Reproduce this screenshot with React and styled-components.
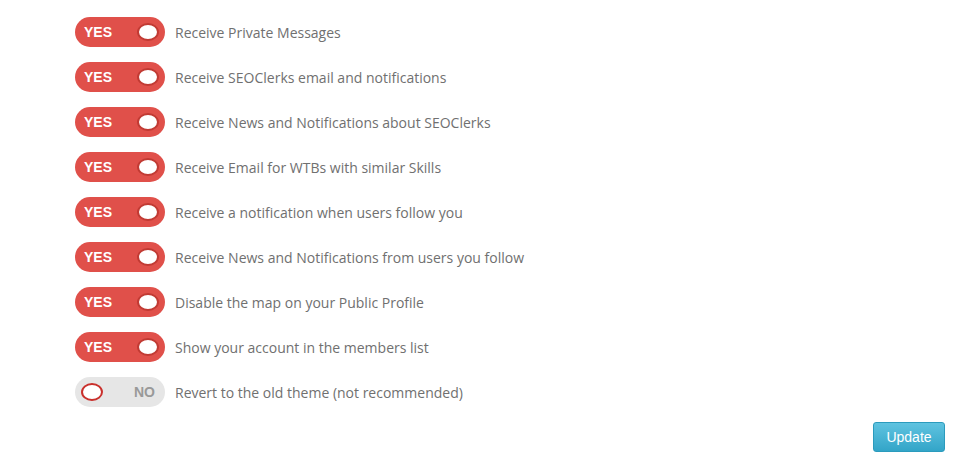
import React, { useState } from "react";
import styled, { createGlobalStyle } from "styled-components";

const GlobalStyle = createGlobalStyle`
  body {
    margin: 0;
    background: #fff;
    font-family: "Open Sans", "Liberation Sans", sans-serif;
  }
`;

const Wrapper = styled.div`
  width: 957px;
  height: 460px;
  box-sizing: border-box;
  padding: 17px 12px 0 75px;
  display: flex;
  flex-direction: column;
`;

const List = styled.ul`
  list-style: none;
  margin: 0;
  padding: 0;
  display: flex;
  flex-direction: column;
  gap: 15px;
`;

const Row = styled.li`
  display: flex;
  flex-direction: row;
  align-items: center;
  height: 30px;
`;

const Switch = styled.button`
  position: relative;
  width: 90px;
  height: 30px;
  border: none;
  border-radius: 15px;
  margin-right: 10px;
  cursor: pointer;
  background: ${(props) => (props.$on ? "#e0504a" : "#e6e6e6")};
  font-family: "Liberation Sans", Arial, sans-serif;
  font-weight: bold;
  font-size: 14px;
  color: ${(props) => (props.$on ? "#fff" : "#999")};
  display: flex;
  align-items: center;
  justify-content: ${(props) => (props.$on ? "flex-start" : "flex-end")};
  padding: ${(props) => (props.$on ? "0 0 0 9px" : "0 10px 0 0")};
  box-sizing: border-box;
`;

const Knob = styled.span`
  position: absolute;
  top: 6px;
  left: ${(props) => (props.$on ? "62px" : "6px")};
  width: 22px;
  height: 18px;
  box-sizing: border-box;
  border-radius: 50%;
  background: #fff;
  border: 2px solid ${(props) => (props.$on ? "#c13a33" : "#c9302c")};
`;

const Label = styled.span`
  font-size: 14px;
  color: #707070;
`;

const Footer = styled.div`
  display: flex;
  justify-content: flex-end;
  margin-top: 15px;
`;

const UpdateButton = styled.button`
  width: 72px;
  height: 30px;
  border: 1px solid #2b9bbd;
  border-radius: 3px;
  background: linear-gradient(#5fc3e0, #33a5c8);
  color: #fff;
  font-family: "Liberation Sans", Arial, sans-serif;
  font-size: 14px;
  cursor: pointer;
`;

const settings = [
  { label: "Receive Private Messages", on: true },
  { label: "Receive SEOClerks email and notifications", on: true },
  { label: "Receive News and Notifications about SEOClerks", on: true },
  { label: "Receive Email for WTBs with similar Skills", on: true },
  { label: "Receive a notification when users follow you", on: true },
  { label: "Receive News and Notifications from users you follow", on: true },
  { label: "Disable the map on your Public Profile", on: true },
  { label: "Show your account in the members list", on: true },
  { label: "Revert to the old theme (not recommended)", on: false },
];

const App = () => {
  const [values, setValues] = useState(settings.map((s) => s.on));

  const toggle = (i) =>
    setValues((prev) => prev.map((v, j) => (j === i ? !v : v)));

  return (
    <>
      <GlobalStyle />
      <Wrapper>
        <List>
          {settings.map((s, i) => (
            <Row key={s.label}>
              <Switch $on={values[i]} onClick={() => toggle(i)}>
                {values[i] ? "YES" : "NO"}
                <Knob $on={values[i]} />
              </Switch>
              <Label>{s.label}</Label>
            </Row>
          ))}
        </List>
        <Footer>
          <UpdateButton>Update</UpdateButton>
        </Footer>
      </Wrapper>
    </>
  );
};

export default App;
